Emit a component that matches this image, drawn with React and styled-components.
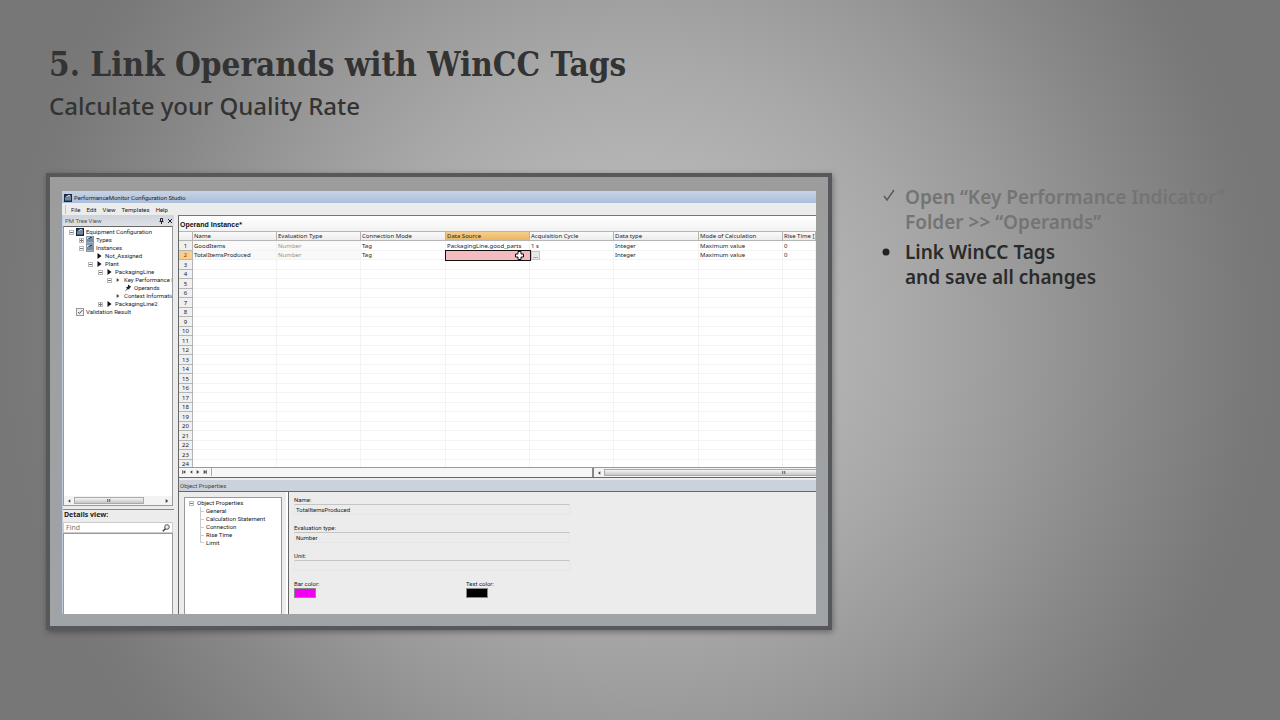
import React from "react";
import styled, { createGlobalStyle, css } from "styled-components";

const GlobalStyle = createGlobalStyle`
  *, *::before, *::after { box-sizing: border-box; }
  body { margin: 0; }
  button, input { font: inherit; color: inherit; margin: 0; padding: 0; border: 0; border-radius: 0; background: none; }
  h1, h2, p, ul, menu { margin: 0; padding: 0; list-style: none; }
`;

const uiFont = `"Noto Sans", "DejaVu Sans", sans-serif`;
const narrowFont = `"Roboto", "Liberation Sans", sans-serif`;

/* ---------- slide ---------- */

const Slide = styled.div`
  min-height: 100vh;
  padding: 40px 46px 90px;
  background: radial-gradient(circle 640px at 50% 47%, #bebebe 0, #b5b5b5 160px, #a8a8a8 280px, #999 390px, #888 500px, #797979 610px, #777 100%);
  color: #333;
  font-family: "Noto Sans", sans-serif;
`;

const Heading = styled.header`
  padding: 0 3px;
  height: 133px;
`;

const Title = styled.h1`
  font: 700 33px/50px "DejaVu Serif Condensed", "DejaVu Serif", serif;
`;

const Subtitle = styled.h2`
  font-size: 24px;
  font-weight: 500;
  line-height: 32px;
`;

const Content = styled.main`
  display: grid;
  grid-template-columns: minmax(0, 1fr) 352px;
  gap: 50px;
  align-items: start;
`;

const Frame = styled.section`
  border: 4px solid #56585b;
  padding: 14px 12px 12px;
  background: linear-gradient(#9c9c9c, #a0a4a7);
  box-shadow: 1px 2px 6px rgba(0, 0, 0, 0.35);
`;

const Steps = styled.ul`
  padding-top: 12px;
  display: grid;
  gap: 5px;
  font-size: 19px;
  font-weight: 600;
  line-height: 25px;
`;

const Step = styled.li`
  display: grid;
  grid-template-columns: 23px auto;
  white-space: nowrap;
  color: ${(p) => (p.$done ? "#747474" : "#2a2a2a")};
`;

const Marker = styled.svg`
  width: 16px;
  height: 25px;
`;

/* ---------- application window ---------- */

const Window = styled.div`
  display: flex;
  flex-direction: column;
  overflow: hidden;
  background: #ececec;
  color: #222;
  font-family: ${uiFont};
  font-size: 6px;
  line-height: 8px;
  white-space: nowrap;
`;

const TitleBar = styled.div`
  display: flex;
  align-items: center;
  gap: 2px;
  height: 12px;
  padding: 1px 2px 0;
  background: linear-gradient(#c9d4e3, #a9bedd);
  font-family: ${narrowFont};
`;

const MenuBar = styled.menu`
  display: flex;
  align-items: center;
  gap: 6px;
  height: 12px;
  padding: 1px 0 0 3px;
  font-family: ${narrowFont};
`;

const Grip = styled.li`
  width: 1px;
  height: 9px;
  margin-right: -1px;
  background: #c4c4c4;
`;

const Workspace = styled.div`
  display: grid;
  grid-template-columns: 112px minmax(0, 1fr);
  gap: 4px;
`;

const Sidebar = styled.aside`
  display: flex;
  flex-direction: column;
  min-width: 0;
  border-left: 1px solid #bccbdd;
`;

const PaneHeader = styled.div`
  display: flex;
  align-items: center;
  gap: 3px;
  height: 11px;
  padding: 0 1px 0 2px;
  background: linear-gradient(#ced4dc, #dfe1e4);
  color: #555;
  font-family: ${narrowFont};
  & > span { flex: 1; }
`;

const IconButton = styled.button`
  display: flex;
  align-items: center;
  justify-content: center;
  svg { display: block; }
`;

const TreeBox = styled.div`
  display: flex;
  flex-direction: column;
  justify-content: space-between;
  height: 280px;
  margin-right: 1px;
  border: 1px solid #999;
  border-top-color: #666;
  background: #fff;
  overflow: hidden;
`;

const Tree = styled.ul`
  padding-top: 1px;
  overflow: hidden;
  font-family: ${narrowFont};
`;

const TreeRow = styled.li`
  display: grid;
  grid-template-columns: 5px 8px auto;
  column-gap: 2px;
  align-items: center;
  justify-content: start;
  height: 8px;
  padding-left: ${(p) => 5 + Math.round(p.$level * 9.6)}px;
`;

const IconSlot = styled.span`
  grid-column: 2;
  display: flex;
  justify-content: center;
`;

const ScrollBar = styled.div`
  display: flex;
  align-items: center;
  gap: 3px;
  height: 9px;
  padding: 0 3px;
  background: #f3f3f3;
`;

const Track = styled.div`
  flex: 1;
  height: 7px;
`;

const Thumb = styled.div`
  display: flex;
  align-items: center;
  justify-content: center;
  width: ${(p) => p.$width};
  height: 7px;
  border: 1px solid #aaa;
  background: linear-gradient(#f4f4f4, #c6c6c6);
`;

const ThumbGrip = styled.span`
  width: 4px;
  height: 3px;
  background: repeating-linear-gradient(90deg, #777 0 1px, #bbb 1px 2px);
`;

const Details = styled.section`
  display: flex;
  flex-direction: column;
  flex: 1;
  margin-top: 3px;
  border-top: 1px solid #888;
`;

const DetailsTitle = styled.label`
  height: 12px;
  padding: 0 1px;
  font-size: 7px;
  font-weight: 700;
  line-height: 10px;
`;

const SearchBox = styled.div`
  display: flex;
  align-items: center;
  height: 11px;
  margin-right: 1px;
  padding: 0 2px;
  border: 1px solid #ccc;
  background: #fff;
  input {
    flex: 1;
    min-width: 0;
    height: 8px;
    font-size: 7px;
    outline: 0;
  }
  input::placeholder { color: #777; opacity: 1; }
`;

const DetailsList = styled.div`
  flex: 1;
  margin-right: 1px;
  border: 1px solid #999;
  border-bottom: 0;
  background: #fff;
`;

const MainPane = styled.div`
  display: flex;
  flex-direction: column;
  min-width: 0;
  border-left: 1px solid #666;
  border-top: 1px solid #777;
`;

const SheetTitle = styled.div`
  height: 15px;
  padding: 0 1px;
  background: linear-gradient(#fff, #f2f2f2);
  color: #111;
  font: 700 7px/17px "Liberation Sans", sans-serif;
`;

const SheetArea = styled.div`
  height: 236px;
  overflow: hidden;
  background: #fff;
`;

const Sheet = styled.table`
  width: 100%;
  table-layout: fixed;
  border-collapse: separate;
  border-spacing: 0;
  tbody tr { height: 10px; }
  tbody tr:nth-child(even) { height: 9px; }
`;

const cell = css`
  padding: 0 0 0 1px;
  overflow: hidden;
  font-weight: 400;
  text-align: left;
  line-height: 8px;
`;

const ColumnHead = styled.th`
  ${cell}
  height: 10px;
  border: solid #b5b5b5;
  border-width: 1px 1px 1px 0;
  background: ${(p) => (p.$active ? "linear-gradient(#f6cf8b, #eab65f)" : "linear-gradient(#fafafa, #ececec)")};
`;

const RowHead = styled.th`
  ${cell}
  padding: 0;
  text-align: center;
  border: solid #b5b5b5;
  border-width: 0 1px 1px 0;
  background: ${(p) => (p.$active ? "#f8cf8c" : "#f0f0f0")};
  color: ${(p) => (p.$active ? "#8a3c00" : "#222")};
`;

const Cell = styled.td`
  ${cell}
  border: solid #f3f3f3;
  border-width: 0 1px 1px 0;
  color: ${(p) => (p.$muted ? "#909090" : "#222")};
  background: ${(p) => (p.$shaded ? "#f9f9f9" : "#fff")};
`;

const EditCell = styled.td`
  position: relative;
  padding: 0;
  outline: 1px solid #111;
  background: #f5bcc0;
  input {
    display: block;
    width: 100%;
    height: 8px;
    outline: 0;
  }
`;

const Pointer = styled.svg`
  position: absolute;
  right: 6px;
  top: 0;
  width: 9px;
  height: 9px;
`;

const BrowseButton = styled.button`
  position: absolute;
  left: 100%;
  top: 0;
  width: 9px;
  height: 9px;
  margin-left: 1px;
  border: 1px solid #c5c5c5;
  background: #e9e9e9;
  line-height: 4px;
`;

const SheetFooter = styled.div`
  display: grid;
  grid-template-columns: 413px minmax(0, 1fr);
  height: 11px;
  border-top: 1px solid #999;
  border-bottom: 1px solid #666;
  background: #f6f6f6;
`;

const Pager = styled.div`
  display: flex;
  align-items: center;
  gap: 3px;
  width: 33px;
  height: 8px;
  padding-left: 3px;
  border-right: 1px solid #aaa;
`;

const SheetScroll = styled(ScrollBar)`
  border-left: 2px solid #888;
  padding: 0 0 0 3px;
`;

const PropsTitle = styled.div`
  height: 12px;
  margin-top: 2px;
  padding-left: 1px;
  border-bottom: 1px solid #666;
  background: #cbd2dc;
  color: #444;
  font-family: ${narrowFont};
  line-height: 11px;
`;

const PropsBody = styled.div`
  display: grid;
  grid-template-columns: 109px minmax(0, 1fr);
  height: 122px;
  font-family: ${narrowFont};
`;

const PropsNav = styled.div`
  padding: 5px 4px 0 5px;
  border-right: 2px solid #fff;
`;

const PropsTree = styled.ul`
  height: 117px;
  padding: 1px 0 0 4px;
  border: 1px solid #999;
  border-bottom: 0;
  background: #fff;
`;

const PropsRoot = styled.li`
  display: flex;
  align-items: center;
  gap: 3px;
  height: 8px;
`;

const PropsItem = styled.li`
  display: flex;
  align-items: center;
  gap: 2px;
  height: 8px;
  padding-left: 11px;
  &::before {
    content: "";
    width: 4px;
    height: ${(p) => (p.$last ? "4px" : "8px")};
    align-self: flex-start;
    border-left: 1px solid #ccc;
    background: linear-gradient(#ccc, #ccc) 0 ${(p) => (p.$last ? "100%" : "4px")} / 4px 1px no-repeat;
  }
`;

const Form = styled.form`
  display: flex;
  flex-direction: column;
  gap: 9px;
  padding: 4px 5px 0;
  border-left: 1px solid #666;
`;

const Field = styled.div`
  display: grid;
  width: 276px;
  label { height: 8px; }
  input {
    height: 11px;
    padding-left: 1px;
    border: 1px solid #e6e6e6;
    border-top-color: #c4c4c4;
  }
`;

const ColorRow = styled.div`
  display: grid;
  grid-template-columns: 172px auto;
  justify-content: start;
`;

const ColorField = styled.div`
  display: grid;
  justify-items: start;
  label { height: 8px; }
  input {
    appearance: none;
    width: 22px;
    height: 10px;
    border: 1px solid #888;
  }
  input::-webkit-color-swatch-wrapper { padding: 0; }
  input::-webkit-color-swatch { border: 0; border-radius: 0; }
`;

/* ---------- icons ---------- */

const AppIcon = ({ light }) => (
  <svg width="8" height="8" viewBox="0 0 8 8">
    <rect x="0.5" y="0.5" width="7" height="7" fill={light ? "#cfd9e2" : "#1f3550"} stroke={light ? "#8799a8" : "#182a40"} />
    <path d="M2 6.5V4M4 6.5V1.5H6V6.5M1.5 3.5L4 2" fill="none" stroke={light ? "#24405c" : "#c9d8e8"} />
  </svg>
);

const CheckIcon = () => (
  <svg width="8" height="8" viewBox="0 0 8 8">
    <rect x="0.5" y="0.5" width="7" height="7" fill="#eee" stroke="#999" />
    <path d="M2 4L3.5 5.5L6.5 2" fill="none" stroke="#555" />
  </svg>
);

const PinIcon = () => (
  <svg width="8" height="8" viewBox="0 0 8 8">
    <path d="M4 0.5L7.5 3L6 3.5L5 5.5L4 5L1 7.5L3 4.5L2 3.5L4 2.5Z" fill="#222" />
  </svg>
);

const Arrow = ({ small, left, bar }) => (
  <svg width={small ? 4 : 5} height={small ? 4 : 6} viewBox="0 0 5 6">
    <path d={left ? "M4.5 0.5L1 3L4.5 5.5Z" : "M0.5 0L4.5 3L0.5 6Z"} fill={small ? "#444" : "#111"} />
    {bar && <path d={left ? "M0.5 0V6" : "M4.5 0V6"} stroke="#222" />}
  </svg>
);

const PushPin = () => (
  <svg width="5" height="6" viewBox="0 0 5 6">
    <path d="M1.5 0.5H3.5V3.5H1.5ZM0.5 3.5H4.5M2.5 3.5V6" fill="none" stroke="#222" />
  </svg>
);

const CloseIcon = () => (
  <svg width="6" height="6" viewBox="0 0 6 6">
    <path d="M1 1L5 5M5 1L1 5" stroke="#222" />
  </svg>
);

const SearchIcon = () => (
  <svg width="8" height="8" viewBox="0 0 8 8">
    <circle cx="5" cy="3" r="2.3" fill="#e3eef2" stroke="#555" />
    <path d="M3.4 4.8L0.8 7.3" stroke="#333" strokeWidth="1.4" />
  </svg>
);

const Toggle = ({ open, name }) => (
  <IconButton type="button" aria-label={name} aria-expanded={open}>
    <svg width="5" height="5" viewBox="0 0 5 5">
      <rect x="0.5" y="0.5" width="4" height="4" fill="#fff" stroke="#bbb" />
      <path d={open ? "M1 2.5H4" : "M1 2.5H4M2.5 1V4"} stroke="#777" />
    </svg>
  </IconButton>
);

const treeIcons = {
  app: <AppIcon />,
  group: <AppIcon light />,
  arrow: <Arrow />,
  smallArrow: <Arrow small />,
  pin: <PinIcon />,
  check: <CheckIcon />,
};

/* ---------- data ---------- */

const tree = [
  { level: 0, open: true, icon: "app", label: "Equipment Configuration" },
  { level: 1, open: false, icon: "group", label: "Types" },
  { level: 1, open: true, icon: "group", label: "Instances" },
  { level: 2, icon: "arrow", label: "Not_Assigned" },
  { level: 2, open: true, icon: "arrow", label: "Plant" },
  { level: 3, open: true, icon: "arrow", label: "PackagingLine" },
  { level: 4, open: true, icon: "smallArrow", label: "Key Performance In" },
  { level: 5, icon: "pin", label: "Operands" },
  { level: 4, icon: "smallArrow", label: "Context Information" },
  { level: 3, open: false, icon: "arrow", label: "PackagingLine2" },
  { level: 0, icon: "check", label: "Validation Result" },
];

const columns = [
  { label: "Name", width: 84 },
  { label: "Evaluation Type", width: 84 },
  { label: "Connection Mode", width: 85 },
  { label: "Data Source", width: 84, active: true },
  { label: "Acquisition Cycle", width: 84 },
  { label: "Data type", width: 85 },
  { label: "Mode of Calculation", width: 84 },
  { label: "Rise Time [" },
];

const records = [
  ["GoodItems", "Number", "Tag", "PackagingLine.good_parts", "1 s", "Integer", "Maximum value", "0"],
  ["TotalItemsProduced", "Number", "Tag", null, "", "Integer", "Maximum value", "0"],
];

const rows = Array.from({ length: 24 }, (_, i) => records[i] || Array(8).fill(""));
const properties = ["General", "Calculation Statement", "Connection", "Rise Time", "Limit"];

/* ---------- parts ---------- */

const DataSourceEditor = () => (
  <EditCell>
    <input aria-label="Data Source" />
    <Pointer viewBox="0 0 9 9">
      <path d="M3 0.5H6V3H8.5V6H6V8.5H3V6H0.5V3H3Z" fill="#fff" stroke="#111" />
    </Pointer>
    <BrowseButton type="button" aria-label="Browse tags">...</BrowseButton>
  </EditCell>
);

const OperandSheet = () => (
  <SheetArea>
    <Sheet>
      <colgroup>
        <col width="14" />
        {columns.map((c) => <col key={c.label} width={c.width} />)}
      </colgroup>
      <thead>
        <tr>
          <ColumnHead />
          {columns.map((c) => <ColumnHead key={c.label} scope="col" $active={c.active}>{c.label}</ColumnHead>)}
        </tr>
      </thead>
      <tbody>
        {rows.map((row, r) => (
          <tr key={r}>
            <RowHead scope="row" $active={r === 1}>{r + 1}</RowHead>
            {row.map((value, c) =>
              value === null ? (
                <DataSourceEditor key={c} />
              ) : (
                <Cell key={c} $muted={c === 1} $shaded={r < 2 && c < 2}>{value}</Cell>
              )
            )}
          </tr>
        ))}
      </tbody>
    </Sheet>
  </SheetArea>
);

const TreePane = () => (
  <Sidebar>
    <PaneHeader>
      <span>PM Tree View</span>
      <IconButton type="button" aria-label="Pin"><PushPin /></IconButton>
      <IconButton type="button" aria-label="Close"><CloseIcon /></IconButton>
    </PaneHeader>
    <TreeBox>
      <Tree>
        {tree.map((n) => (
          <TreeRow key={n.label} $level={n.level}>
            {n.open !== undefined && <Toggle open={n.open} name={n.label} />}
            <IconSlot>{treeIcons[n.icon]}</IconSlot>
            <span>{n.label}</span>
          </TreeRow>
        ))}
      </Tree>
      <ScrollBar>
        <Arrow small left />
        <Track><Thumb $width="80%"><ThumbGrip /></Thumb></Track>
        <Arrow small />
      </ScrollBar>
    </TreeBox>
    <Details>
      <DetailsTitle htmlFor="find">Details view:</DetailsTitle>
      <SearchBox>
        <input id="find" placeholder="Find" />
        <IconButton type="button" aria-label="Search"><SearchIcon /></IconButton>
      </SearchBox>
      <DetailsList />
    </Details>
  </Sidebar>
);

const PropertiesPane = () => (
  <>
    <PropsTitle>Object Properties</PropsTitle>
    <PropsBody>
      <PropsNav>
        <PropsTree>
          <PropsRoot><Toggle open name="Object Properties" />Object Properties</PropsRoot>
          {properties.map((p, i) => (
            <PropsItem key={p} $last={i === properties.length - 1}>{p}</PropsItem>
          ))}
        </PropsTree>
      </PropsNav>
      <Form>
        <Field><label htmlFor="name">Name:</label><input id="name" defaultValue="TotalItemsProduced" /></Field>
        <Field><label htmlFor="type">Evaluation type:</label><input id="type" defaultValue="Number" /></Field>
        <Field><label htmlFor="unit">Unit:</label><input id="unit" /></Field>
        <ColorRow>
          <ColorField><label htmlFor="bar">Bar color:</label><input id="bar" type="color" defaultValue="#f000f0" /></ColorField>
          <ColorField><label htmlFor="text">Text color:</label><input id="text" type="color" defaultValue="#000000" /></ColorField>
        </ColorRow>
      </Form>
    </PropsBody>
  </>
);

export default function App() {
  return (
    <Slide>
      <GlobalStyle />
      <Heading>
        <Title>5. Link Operands with WinCC Tags</Title>
        <Subtitle>Calculate your Quality Rate</Subtitle>
      </Heading>
      <Content>
        <Frame>
          <Window>
            <TitleBar><AppIcon />PerformanceMonitor Configuration Studio</TitleBar>
            <MenuBar>
              <Grip />
              {["File", "Edit", "View", "Templates", "Help"].map((m) => (
                <li key={m}><button type="button">{m}</button></li>
              ))}
            </MenuBar>
            <Workspace>
              <TreePane />
              <MainPane>
                <SheetTitle>Operand Instance*</SheetTitle>
                <OperandSheet />
                <SheetFooter>
                  <Pager>
                    <Arrow small left bar /><Arrow small left /><Arrow small /><Arrow small bar />
                  </Pager>
                  <SheetScroll>
                    <Arrow small left />
                    <Track><Thumb $width="170%"><ThumbGrip /></Thumb></Track>
                  </SheetScroll>
                </SheetFooter>
                <PropertiesPane />
              </MainPane>
            </Workspace>
          </Window>
        </Frame>
        <Steps>
          <Step $done>
            <Marker viewBox="0 0 16 25">
              <path d="M2 11L5 15L12 5" fill="none" stroke="#5c5c5c" strokeWidth="1.5" />
            </Marker>
            <p>Open “Key Performance Indicator”<br />Folder &gt;&gt; “Operands”</p>
          </Step>
          <Step>
            <Marker viewBox="0 0 16 25">
              <circle cx="4" cy="12" r="3.5" fill="#222" />
            </Marker>
            <p>Link WinCC Tags<br />and save all changes</p>
          </Step>
        </Steps>
      </Content>
    </Slide>
  );
}
